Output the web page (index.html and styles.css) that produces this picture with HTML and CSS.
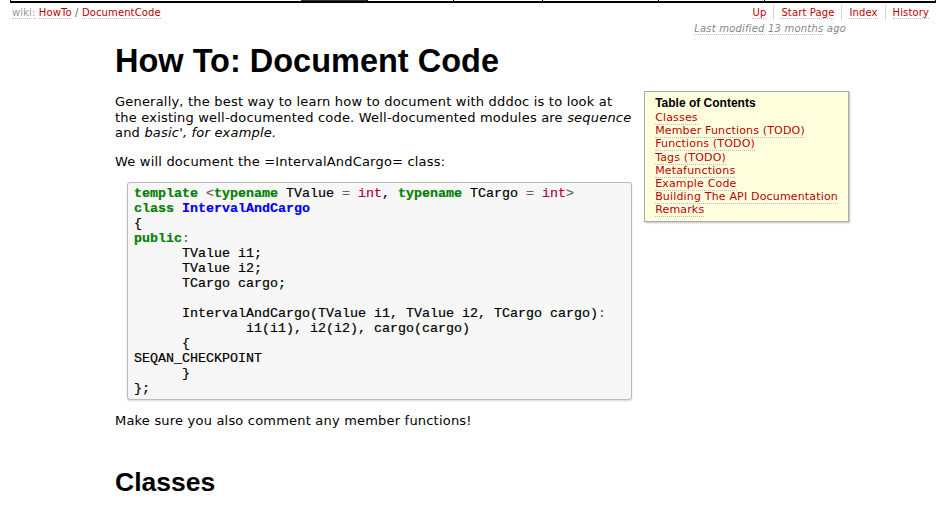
FILE: index.html
```html
<!DOCTYPE html>
<html>
<head>
<meta charset="utf-8">
<title>HowTo/DocumentCode</title>
<link rel="stylesheet" href="styles.css">
</head>
<body>
<div class="mainnav">
  <span class="cell c1"></span>
  <span class="cell c2"></span>
  <span class="cell c3 active"></span>
  <span class="cell c4"></span>
  <span class="cell c5"></span>
  <span class="cell c6"></span>
  <span class="cell c7"></span>
  <span class="cell c8"></span>
</div>
<div class="ctxbar">
  <div class="crumbs"><a class="wikilink" href="#">wiki:</a> <a href="#">HowTo</a> <span class="sep">/</span> <a href="#">DocumentCode</a></div>
  <div class="ctxright">
    <ul class="ctxnav">
      <li class="first"><a href="#">Up</a></li>
      <li><a href="#">Start Page</a></li>
      <li><a href="#">Index</a></li>
      <li class="last"><a href="#">History</a></li>
    </ul>
    <p class="lastmod"><a href="#">Last modified</a> <a href="#">13 months</a> ago</p>
  </div>
</div>
<div class="content">
  <h1>How To: Document Code</h1>
  <div class="toc">
    <h4>Table of Contents</h4>
    <ol>
      <li><a href="#">Classes</a></li>
      <li><a href="#">Member Functions (TODO)</a></li>
      <li><a href="#">Functions (TODO)</a></li>
      <li><a href="#">Tags (TODO)</a></li>
      <li><a href="#">Metafunctions</a></li>
      <li><a href="#">Example Code</a></li>
      <li><a href="#">Building The API Documentation</a></li>
      <li><a href="#">Remarks</a></li>
    </ol>
  </div>
  <p>Generally, the best way to learn how to document with dddoc is to look at the existing well-documented code. Well-documented modules are <em>sequence</em> and <em>basic', for example.</em></p>
  <p>We will document the =IntervalAndCargo= class:</p>
<pre class="code"><span class="k">template</span> <span class="o">&lt;</span><span class="k">typename</span> TValue <span class="o">=</span> <span class="kt">int</span>, <span class="k">typename</span> TCargo <span class="o">=</span> <span class="kt">int</span><span class="o">&gt;</span>
<span class="k">class</span> <span class="nc">IntervalAndCargo</span>
{
<span class="k">public</span><span class="o">:</span>
      TValue i1;
      TValue i2;
      TCargo cargo;

      IntervalAndCargo(TValue i1, TValue i2, TCargo cargo)<span class="o">:</span>
              i1(i1), i2(i2), cargo(cargo)
      {
SEQAN_CHECKPOINT
      }
};</pre>
  <p>Make sure you also comment any member functions!</p>
  <h2>Classes</h2>
</div>
</body>
</html>
```

FILE: styles.css
```css
html, body {
  margin: 0;
  padding: 0;
  background: #fff;
}
body {
  font-family: "DejaVu Sans", Verdana, sans-serif;
  font-size: 13px;
  color: #000;
  overflow: hidden;
}
a {
  color: #b00;
  text-decoration: none;
  border-bottom: 1px dotted #bbb;
}

/* top navigation strip (scrolled off) */
.mainnav {
  display: flex;
  margin: 0 10px 0 10px;
  height: 1px;
  border-left: 1px solid #000;
  border-bottom: 2px solid #000;
}
.cell {
  border-right: 1px solid #000;
  height: 1px;
}
.c1 { width: 290px; border-right: none; }
.c2 { width: 0; border-right: none; }
.c3 { width: 66px; background: #333; border-right: 1px solid #000; }
.c4 { width: 85px; }
.c5 { width: 88px; }
.c6 { width: 115px; }
.c7 { width: 105px; }
.c8 { width: 95px; }
.mainnav .cell:last-child { flex: 1; }

/* context bar */
.ctxbar {
  display: flex;
  justify-content: space-between;
  align-items: flex-start;
  font-size: 10px;
  letter-spacing: 0.12px;
  padding: 2px 17px 0 12px;
}
.crumbs {
  color: #999;
  line-height: 15px;
}
.crumbs .wikilink {
  color: #999;
}
.crumbs .sep {
  color: #666;
}
.ctxright {
  display: flex;
  flex-direction: column;
  align-items: flex-end;
}
.ctxnav {
  display: flex;
  list-style: none;
  margin: 0;
  padding: 0;
  line-height: 15px;
}
.ctxnav li {
  padding: 0 7px;
  border-left: 1px solid #d7d7d7;
}
.ctxnav li.first {
  border-left: none;
}
.ctxnav li.last {
  padding-right: 0;
}
.lastmod {
  margin: 1px 83px 0 0;
  line-height: 15px;
  font-style: italic;
  color: #888;
}
.lastmod a {
  color: #888;
}

/* content */
.content {
  margin-left: 115px;
  width: 734px;
}
h1 {
  font-family: "Liberation Sans", Arial, sans-serif;
  font-weight: bold;
  font-size: 32.5px;
  line-height: 38px;
  margin: 6px 0 14px 0;
}
h2 {
  font-family: "Liberation Sans", Arial, sans-serif;
  font-weight: bold;
  font-size: 26.5px;
  line-height: 32px;
  margin: 37px 0 0 0;
}
p {
  margin: 0 0 13px 0;
  line-height: 15.5px;
  letter-spacing: 0.2px;
}
.toc {
  float: right;
  margin: -3px 0 12px 12px;
  padding: 5px 10px 4px 10px;
  background: #ffffdd;
  border: 1px solid #aaa;
  box-shadow: 1px 1px 2px rgba(0,0,0,0.25);
  font-size: 11px;
  letter-spacing: 0.17px;
}
.toc h4 {
  font-family: "Liberation Sans", Arial, sans-serif;
  font-weight: bold;
  font-size: 12px;
  letter-spacing: 0;
  line-height: 13px;
  margin: 0 0 1px 0;
}
.toc ol {
  list-style: none;
  margin: 0;
  padding: 0;
}
.toc li {
  line-height: 13.2px;
}
pre.code {
  overflow: hidden;
  margin: 0 0 13px 12px;
  padding: 3px 6px;
  background: #f7f7f7;
  border: 1px solid #bbb;
  border-radius: 3px;
  box-shadow: 0 1px 2px rgba(0,0,0,0.15);
  font-family: "Liberation Mono", "Courier New", monospace;
  font-size: 13.33px;
  line-height: 15px;
  color: #000;
  -webkit-text-stroke: 0.2px #000;
}
.k {
  color: #008000;
  font-weight: bold;
  -webkit-text-stroke: 0.2px #008000;
}
.nc {
  color: #0000ff;
  font-weight: bold;
  -webkit-text-stroke: 0.2px #0000ff;
}
.kt {
  color: #b00040;
  -webkit-text-stroke: 0.2px #b00040;
}
.o {
  color: #666;
  -webkit-text-stroke: 0.2px #666;
}
```
